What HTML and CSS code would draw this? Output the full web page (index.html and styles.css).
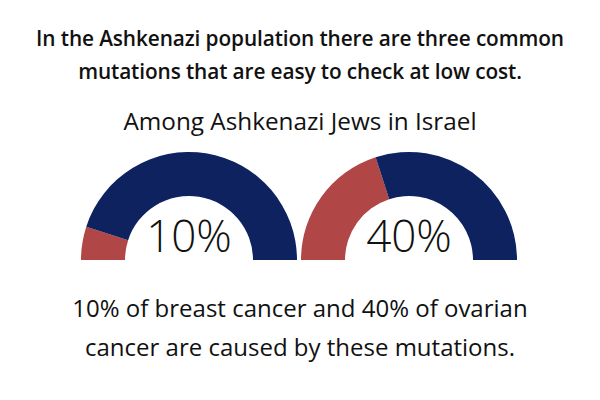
FILE: index.html
```html
<!DOCTYPE html>
<html lang="en">
<head>
<meta charset="utf-8">
<link rel="stylesheet" href="styles.css">
</head>
<body>
<main class="page">
  <h1 class="title">In the Ashkenazi population there are three common<br>mutations that are easy to check at low cost.</h1>
  <h2 class="subtitle">Among Ashkenazi Jews in Israel</h2>
  <div class="gauges">
    <svg class="gauge" width="216" height="108" viewBox="0 0 216 108">
      <path class="red" d="M0,108 A108,108 0 0 1 5.28,74.63 L47.13,88.22 A64,64 0 0 0 44,108 Z"/>
      <path class="navy" d="M5.28,74.63 A108,108 0 0 1 216,108 L172,108 A64,64 0 0 0 47.13,88.22 Z"/>
      <text class="pct" x="108" y="100" text-anchor="middle">10%</text>
    </svg>
    <svg class="gauge" width="216" height="108" viewBox="0 0 216 108">
      <path class="red" d="M0,108 A108,108 0 0 1 74.63,5.28 L88.22,47.13 A64,64 0 0 0 44,108 Z"/>
      <path class="navy" d="M74.63,5.28 A108,108 0 0 1 216,108 L172,108 A64,64 0 0 0 88.22,47.13 Z"/>
      <text class="pct" x="108" y="100" text-anchor="middle">40%</text>
    </svg>
  </div>
  <p class="caption">10% of breast cancer and 40% of ovarian<br>cancer are caused by these mutations.</p>
</main>
</body>
</html>
```

FILE: styles.css
```css
html, body {
  margin: 0;
  padding: 0;
  background: #ffffff;
}
.page {
  width: 600px;
  height: 400px;
  display: flex;
  flex-direction: column;
  align-items: center;
  font-family: "Open Sans", "Noto Sans", sans-serif;
  color: #111111;
  text-align: center;
}
.title {
  margin: 22px 0 0;
  font-size: 20.8px;
  font-weight: 600;
  line-height: 33px;
  letter-spacing: -0.1px;
  white-space: nowrap;
}
.subtitle {
  margin: 16.5px 0 0;
  font-size: 24.3px;
  font-weight: 400;
  line-height: 32px;
  white-space: nowrap;
}
.gauges {
  margin-top: 15.5px;
  display: flex;
  gap: 4px;
  margin-left: -2px;
}
.gauge {
  display: block;
  overflow: visible;
}
.red { fill: #b04646; }
.navy { fill: #0d225e; }
.pct {
  font-family: "Open Sans", "Noto Sans", sans-serif;
  font-size: 44px;
  font-weight: 300;
  fill: #111111;
}
.caption {
  margin: 28px 0 0;
  font-size: 24px;
  font-weight: 400;
  line-height: 39px;
  white-space: nowrap;
}
```
